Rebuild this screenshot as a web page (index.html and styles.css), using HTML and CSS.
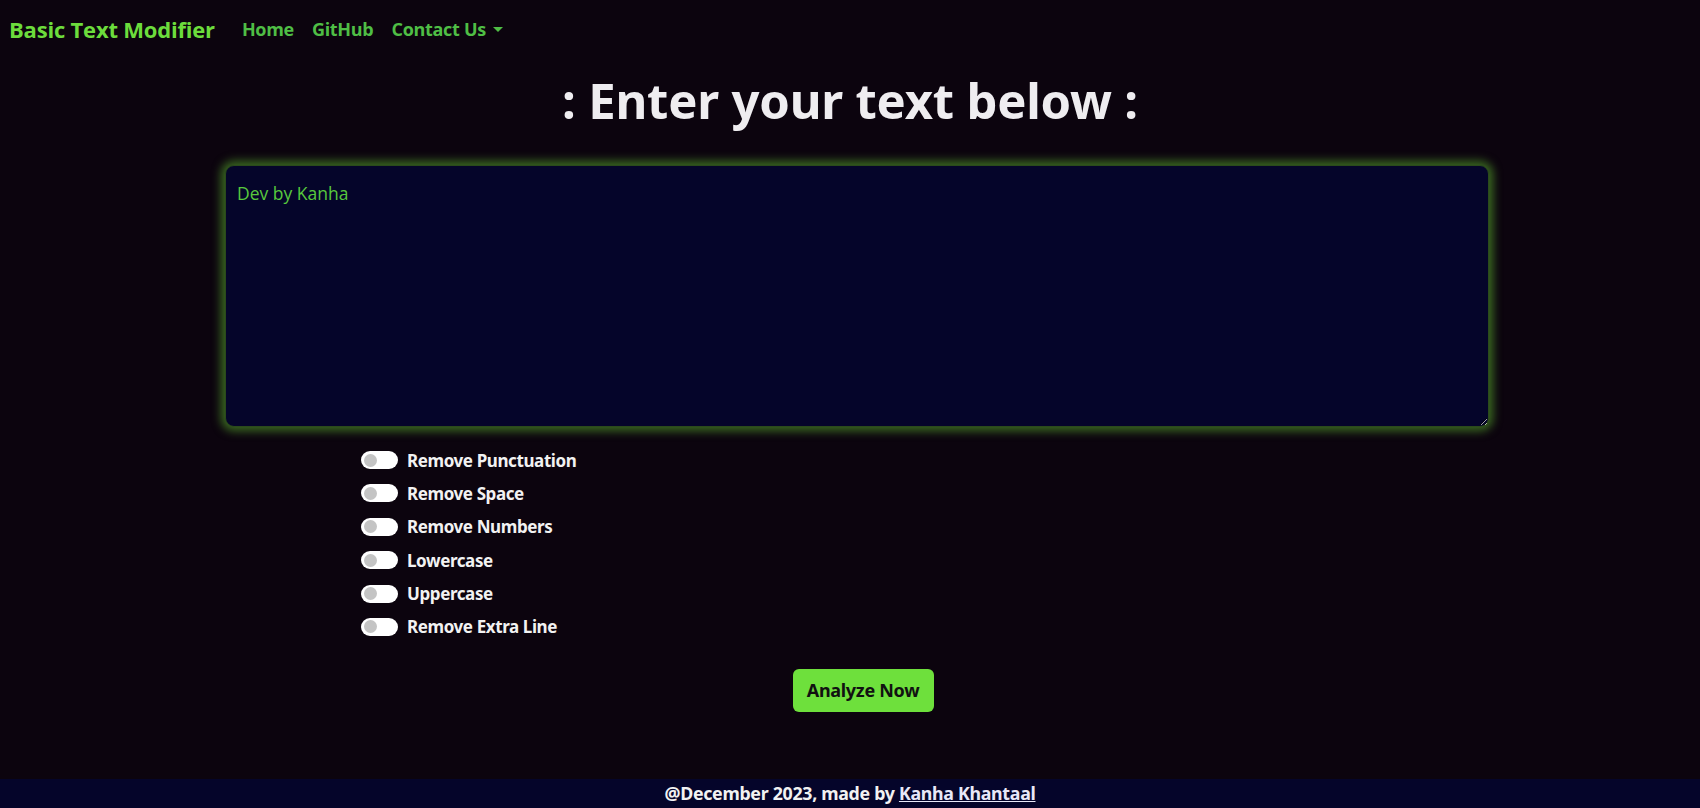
FILE: index.html
```html
<!DOCTYPE html>
<html lang="en">
<head>
<meta charset="utf-8">
<title>Basic Text Modifier</title>
<link rel="stylesheet" href="styles.css">
</head>
<body>
<nav class="navbar">
  <a class="brand" href="#">Basic Text Modifier</a>
  <ul class="nav-links">
    <li><a href="#">Home</a></li>
    <li><a href="#">GitHub</a></li>
    <li><a href="#" class="dropdown">Contact Us <span class="caret"></span></a></li>
  </ul>
</nav>
<main class="main">
  <h1 class="title">: Enter your text below :</h1>
  <div class="editor-wrap">
    <textarea class="editor">Dev by Kanha</textarea>
  </div>
  <div class="options">
    <label class="option"><span class="switch"><span class="knob"></span></span><span class="opt-label">Remove Punctuation</span></label>
    <label class="option"><span class="switch"><span class="knob"></span></span><span class="opt-label">Remove Space</span></label>
    <label class="option"><span class="switch"><span class="knob"></span></span><span class="opt-label">Remove Numbers</span></label>
    <label class="option"><span class="switch"><span class="knob"></span></span><span class="opt-label">Lowercase</span></label>
    <label class="option"><span class="switch"><span class="knob"></span></span><span class="opt-label">Uppercase</span></label>
    <label class="option"><span class="switch"><span class="knob"></span></span><span class="opt-label">Remove Extra Line</span></label>
  </div>
  <div class="actions">
    <button class="analyze">Analyze Now</button>
  </div>
</main>
<footer class="footer">@December 2023, made by <a href="#">Kanha Khantaal</a></footer>
</body>
</html>
```
FILE: styles.css
```css
* { box-sizing: border-box; }
html, body { margin: 0; padding: 0; }
body {
  background: #0c040e;
  color: #f0f0f0;
  font-family: "Open Sans", "Noto Sans", sans-serif;
  height: 808px;
  display: flex;
  flex-direction: column;
  overflow: hidden;
}
.navbar {
  display: flex;
  align-items: center;
  height: 58px;
  padding: 0 8px 0 9px;
}
.brand {
  color: #6cdc3c;
  font-weight: 700;
  font-size: 22px;
  text-decoration: none;
  letter-spacing: -0.2px;
  margin-right: 18px;
}
.nav-links {
  display: flex;
  list-style: none;
  margin: 0;
  padding: 0;
  gap: 0;
}
.nav-links a {
  color: #4fbe45;
  text-decoration: none;
  font-weight: 700;
  font-size: 18px;
  padding: 0 9px;
  display: flex;
  align-items: center;
  letter-spacing: -0.3px;
}
.caret {
  display: inline-block;
  margin-left: 7px;
  border-top: 5px solid #4fbe45;
  border-left: 5px solid transparent;
  border-right: 5px solid transparent;
}
.main {
  flex: 1;
  display: flex;
  flex-direction: column;
}
.title {
  margin: 12px 0 0;
  text-align: center;
  font-family: "Noto Sans", sans-serif;
  font-weight: 700;
  font-size: 49px;
  line-height: 60px;
  letter-spacing: -0.2px;
  color: #efedf0;
}
.editor-wrap {
  padding: 35px 211px 0 225px;
}
.editor {
  display: block;
  width: 100%;
  height: 262px;
  background: #05052a;
  color: #58c93d;
  border: 1px solid #2b4a1c;
  border-radius: 9px;
  padding: 15px 11px;
  font-family: "Open Sans", "Noto Sans", sans-serif;
  font-size: 17.5px;
  box-shadow: 0 0 10px 4px rgba(96, 190, 50, 0.55);
  outline: none;
  resize: vertical;
}
.options {
  display: flex;
  flex-direction: column;
  gap: 13.4px;
  padding: 23px 0 0 361px;
}
.option {
  display: flex;
  align-items: center;
  gap: 9px;
  height: 20px;
}
.switch {
  width: 37px;
  height: 18px;
  border-radius: 9px;
  background: #ffffff;
  display: flex;
  align-items: center;
  padding-left: 3px;
}
.knob {
  width: 13px;
  height: 13px;
  border-radius: 50%;
  background: #c4c4c4;
}
.opt-label {
  font-family: "Noto Sans", sans-serif;
  font-weight: 700;
  font-size: 17px;
  letter-spacing: -0.4px;
  color: #f2f2f2;
}
.actions {
  display: flex;
  justify-content: center;
  padding-top: 32px;
}
.analyze {
  width: 141px;
  height: 43px;
  margin-left: 26px;
  background: #6ee03c;
  border: none;
  border-radius: 6px;
  color: #111;
  font-family: "Noto Sans", sans-serif;
  font-weight: 700;
  font-size: 18px;
  letter-spacing: -0.3px;
}
.footer {
  height: 29px;
  background: #05052a;
  color: #f2f2f2;
  text-align: center;
  font-family: "Noto Sans", sans-serif;
  font-weight: 700;
  font-size: 17.8px;
  line-height: 29px;
  letter-spacing: -0.3px;
}
.footer a {
  color: #e8e8f8;
  text-decoration: underline;
}
```
